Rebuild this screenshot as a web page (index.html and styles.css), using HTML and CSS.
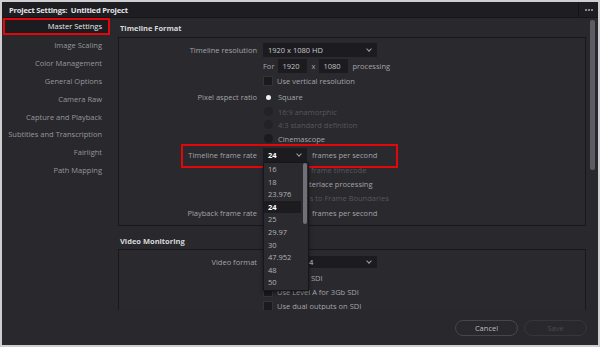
FILE: index.html
```html
<!DOCTYPE html>
<html lang="en">
<head>
  <meta charset="UTF-8" />
  <title>Project Settings</title>
  <link rel="stylesheet" href="styles.css">
</head>
<body>

  <div class="window">
    <!-- Title Bar -->
    <div class="titlebar">
      <span class="title">Project Settings:&nbsp; Untitled Project</span>
      <button class="more"><span></span><span></span><span></span></button>
    </div>

    <div class="main">
      <!-- Sidebar -->
      <nav class="sidebar">
        <a href="#" class="active">Master Settings</a>
        <a href="#">Image Scaling</a>
        <a href="#">Color Management</a>
        <a href="#">General Options</a>
        <a href="#">Camera Raw</a>
        <a href="#">Capture and Playback</a>
        <a href="#">Subtitles and Transcription</a>
        <a href="#">Fairlight</a>
        <a href="#">Path Mapping</a>
      </nav>

      <!-- Settings -->
      <div class="content">
        <div class="scroll">
          <h2 class="first">Timeline Format</h2>
          <div class="panel">
            <div class="row h16">
              <label>Timeline resolution</label>
              <div class="select wide"><span>1920 x 1080 HD</span><i class="chev"></i></div>
            </div>
            <div class="row h15">
              <label></label>
              <span class="txt">For</span>
              <span class="field">1920</span>
              <span class="txt">x</span>
              <span class="field">1080</span>
              <span class="txt">processing</span>
            </div>
            <div class="row h16">
              <label></label>
              <span class="check"></span><span class="txt">Use vertical resolution</span>
            </div>
            <div class="row h16">
              <label>Pixel aspect ratio</label>
              <span class="radio on"></span><span class="txt">Square</span>
            </div>
            <div class="row h13 dim">
              <label></label>
              <span class="radio"></span><span class="txt">16:9 anamorphic</span>
            </div>
            <div class="row h13 dim">
              <label></label>
              <span class="radio"></span><span class="txt">4:3 standard definition</span>
            </div>
            <div class="row h15">
              <label></label>
              <span class="radio"></span><span class="txt">Cinemascope</span>
            </div>
            <div class="row h17 marked">
              <label>Timeline frame rate</label>
              <div class="select short"><b>24</b><i class="chev"></i></div>
              <span class="txt">frames per second</span>

              <!-- open list -->
              <div class="dropdown">
                <div class="options">
                  <div>16</div>
                  <div>18</div>
                  <div>23.976</div>
                  <div class="sel">24</div>
                  <div>25</div>
                  <div>29.97</div>
                  <div>30</div>
                  <div>47.952</div>
                  <div>48</div>
                  <div>50</div>
                </div>
                <div class="thumb"></div>
              </div>
            </div>
            <!-- rows partly covered by the open list -->
            <div class="row h14 dim">
              <label></label>
              <span class="check"></span><span class="txt"><span class="under">Use drop </span>frame timecode</span>
            </div>
            <div class="row h14">
              <label></label>
              <span class="check"></span><span class="txt"><span class="under">Enable in</span>terlace processing</span>
            </div>
            <div class="row h14 dim">
              <label></label>
              <span class="check"></span><span class="txt"><span class="under">Snap edit</span>s to Frame Boundaries</span>
            </div>
            <div class="row h16">
              <label>Playback frame rate</label>
              <div class="select short under"><span>24</span><i class="chev"></i></div>
              <span class="txt">frames per second</span>
            </div>
          </div>

          <h2>Video Monitoring</h2>
          <div class="panel">
            <div class="row h16">
              <label>Video format</label>
              <div class="select wide thin"><span><span class="under">HD 1080p 2</span>4</span><i class="chev"></i></div>
            </div>
            <div class="row h15">
              <label></label>
              <span class="check"></span><span class="txt"><span class="under">Use 4:4:4 </span>SDI</span>
            </div>
            <div class="row h14">
              <label></label>
              <span class="check"></span><span class="txt">Use Level A for 3Gb SDI</span>
            </div>
            <div class="row h14">
              <label></label>
              <span class="check"></span><span class="txt">Use dual outputs on SDI</span>
            </div>
          </div>
        </div>
        <div class="scrollbar"><div class="bar"></div></div>
      </div>
    </div>

    <!-- Footer -->
    <div class="footer">
      <button class="btn">Cancel</button>
      <button class="btn disabled">Save</button>
    </div>
  </div>

</body>
</html>
```

FILE: styles.css
```css
* {
  box-sizing: border-box;
}

body {
  margin: 0;
  background-color: #fff;
  font-family: "Open Sans", "Noto Sans", sans-serif;
  font-size: 7.5px;
  color: #a4a4a8;
}

.window {
  width: 600px;
  height: 347px;
  border: 2px solid #cfcfd2;
  background-color: #28282d;
  display: flex;
  flex-direction: column;
  overflow: hidden;
}

/* title bar */
.titlebar {
  height: 16px;
  flex: none;
  display: flex;
  align-items: center;
  justify-content: space-between;
  background-color: #1e1e22;
  border-bottom: 1px solid #151518;
  padding-left: 7px;
}

.title {
  color: #e4e4e6;
  font-weight: bold;
  font-size: 7.6px;
  letter-spacing: -0.2px;
}

.more {
  height: 15px;
  width: 20px;
  border: none;
  border-left: 1px solid #151518;
  background: transparent;
  display: flex;
  align-items: center;
  justify-content: center;
  gap: 1px;
  padding: 0;
}

.more span {
  width: 2px;
  height: 2px;
  background-color: #8a8a8e;
}

.main {
  flex: 1;
  display: flex;
  min-height: 0;
}

/* sidebar */
.sidebar {
  width: 108px;
  flex: none;
  display: flex;
  flex-direction: column;
}

.sidebar a {
  height: 17.9px;
  line-height: 17.9px;
  padding: 0 8px 0 0;
  text-align: right;
  color: #97979b;
  text-decoration: none;
  margin-left: 1px;
}

.sidebar a.active {
  color: #e8e8ea;
  background-color: #1c1c20;
  border: 2px solid #e3060b;
  padding-right: 6px;
  line-height: 13px;
  height: 17px;
  margin-bottom: 2px;
}

/* content */
.content {
  flex: 1;
  display: flex;
  min-width: 0;
  position: relative;
}

.scroll {
  flex: 1;
  overflow: hidden;
  padding: 0 0 0 8px;
}

h2 {
  margin: 0;
  font-size: 7.5px;
  font-weight: bold;
  color: #d8d8da;
  height: 23px;
  padding: 11px 0 0 2px;
  line-height: 8px;
}

h2.first {
  height: 19px;
  padding-top: 6px;
}

.panel {
  border: 1px solid #18181b;
  background-color: #29292e;
  padding: 4px 0 4px;
  margin-right: 2px;
}

.row {
  display: flex;
  align-items: center;
  position: relative;
}

.h13 { height: 13px; }
.h14 { height: 14px; }
.h15 { height: 15px; }
.h16 { height: 16px; }
.h17 { height: 17px; }

.row label {
  width: 138px;
  flex: none;
  text-align: right;
  margin-right: 6px;
  color: #a4a4a8;
}

.txt {
  margin-right: 4px;
  white-space: nowrap;
}

.dim .txt {
  color: #58585c;
}

/* text hidden under the open list */
.under {
  visibility: hidden;
}

.select {
  height: 14px;
  background-color: #1c1c20;
  display: flex;
  align-items: center;
  justify-content: space-between;
  padding: 0 6px 0 5px;
  color: #c8c8cc;
  margin-right: 5px;
}

.select.wide {
  width: 114px;
}

.select.thin {
  height: 12px;
}

.select.short {
  width: 44px;
}

.select b {
  color: #fff;
}

.chev {
  width: 4px;
  height: 4px;
  border-right: 1px solid #a0a0a4;
  border-bottom: 1px solid #a0a0a4;
  transform: rotate(45deg);
  margin-top: -2px;
}

.field {
  background-color: #1c1c20;
  height: 14px;
  line-height: 14px;
  color: #c0c0c4;
  padding-left: 4px;
  width: 29px;
  margin-right: 4px;
}

.check {
  width: 10px;
  height: 10px;
  background-color: #1b1b1e;
  border: 1px solid #333338;
  margin-right: 4px;
}

.radio {
  width: 9px;
  height: 9px;
  border-radius: 50%;
  background-color: #1b1b1e;
  margin: 0 5px 0 1px;
}

.dim .radio {
  background-color: #232327;
}

.radio.on {
  background-color: transparent;
  position: relative;
}

.radio.on::after {
  content: "";
  position: absolute;
  left: 2px;
  top: 2px;
  width: 5px;
  height: 5px;
  border-radius: 50%;
  background-color: #f0f0f2;
}

/* red highlight around the frame rate row */
.marked::before {
  content: "";
  position: absolute;
  left: 62px;
  top: -2px;
  width: 213px;
  height: 20px;
  border: 2px solid #e3060b;
  pointer-events: none;
}

/* open dropdown list */
.dropdown {
  position: absolute;
  left: 144px;
  top: 16px;
  width: 46px;
  height: 129px;
  background-color: #2a2a2f;
  border: 1px solid #17171a;
  display: flex;
  z-index: 10;
  box-shadow: 0 2px 4px rgba(0, 0, 0, 0.4);
}

.options {
  flex: 1;
}

.options div {
  height: 12.6px;
  line-height: 12.6px;
  padding-left: 4px;
  color: #b4b4b8;
}

.options .sel {
  background-color: #1c1c20;
  color: #fff;
  font-weight: bold;
}

.dropdown .thumb {
  width: 4px;
  height: 61px;
  background-color: #707076;
  border-radius: 2px;
  margin: 0 1px 0 2px;
}

.scrollbar {
  width: 10px;
  flex: none;
  padding: 2px 3px 0 2px;
}

.scrollbar .bar {
  height: 150px;
  background-color: #5c5c62;
  border-radius: 2px;
}

/* footer */
.footer {
  height: 35px;
  flex: none;
  display: flex;
  justify-content: flex-end;
  align-items: center;
  gap: 6px;
  padding: 0 11px 0 0;
}

.btn {
  width: 63px;
  height: 16px;
  border-radius: 8px;
  border: 1px solid #46464c;
  background-color: transparent;
  color: #bcbcc0;
  font-family: inherit;
  font-size: 7.5px;
  padding: 0;
}

.btn.disabled {
  color: #4c4c50;
  border-color: #36363b;
}
```
